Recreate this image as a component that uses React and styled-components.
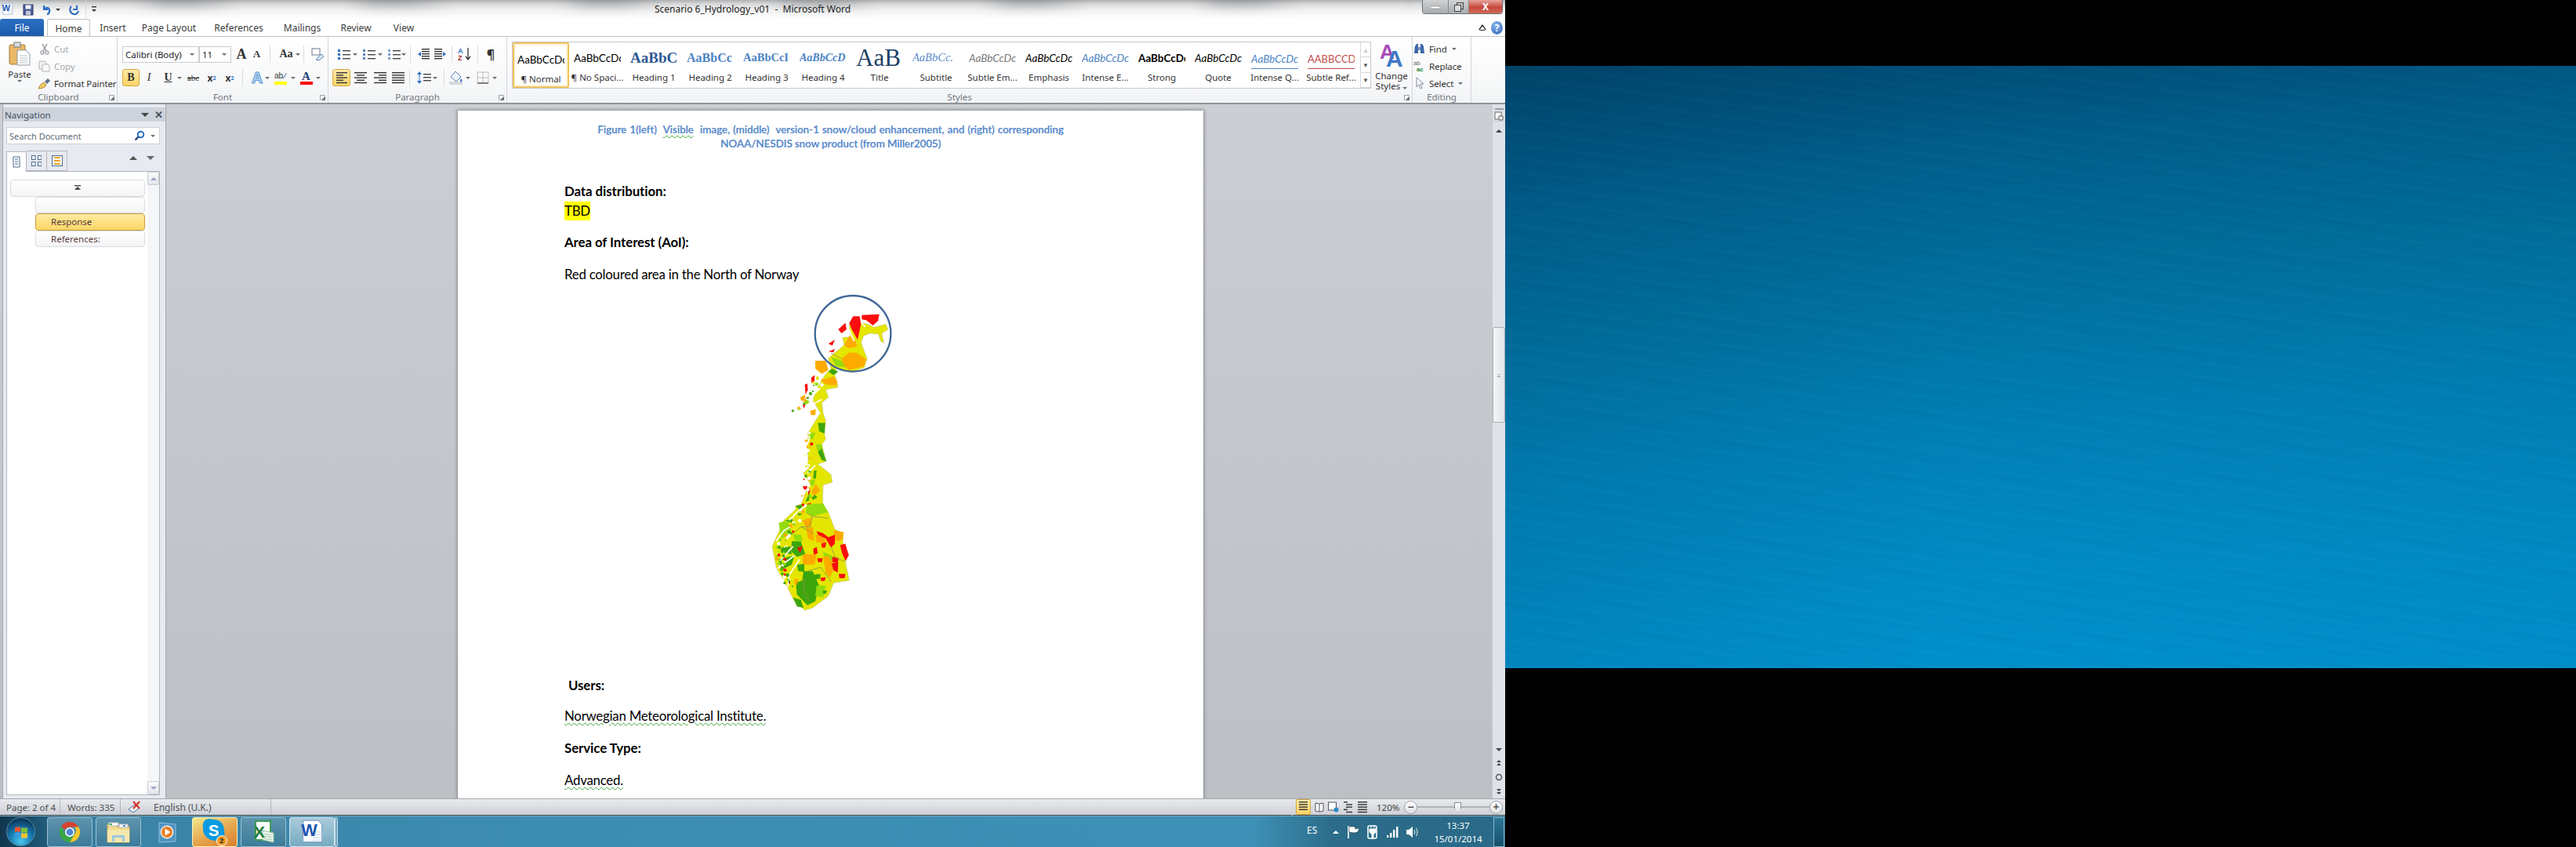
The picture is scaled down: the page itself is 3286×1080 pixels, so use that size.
import styled, { createGlobalStyle } from "styled-components";

const UI = `"Noto Sans", "Open Sans", sans-serif`;
const DOC = `Lato, "Open Sans", sans-serif`;

const Global = createGlobalStyle`
  html, body { margin: 0; padding: 0; background: #000; }
  * { box-sizing: border-box; }
`;

const Desk = styled.div`
  width: 3286px;
  height: 1080px;
  display: flex;
  overflow: hidden;
  background: #000;
  font-family: ${UI};
`;

const Screen = styled.div`
  width: 1920px;
  height: 1080px;
  flex: none;
  display: flex;
  flex-direction: column;
`;

const Second = styled.div`
  flex: 1;
  padding-top: 84px;
`;

const Wallpaper = styled.div`
  height: 768px;
  background:
    repeating-linear-gradient(187deg, rgba(255,255,255,0) 0 7px, rgba(255,255,255,.012) 9px 11px, rgba(0,0,0,.012) 13px 17px),
    repeating-linear-gradient(192deg, rgba(0,40,80,0) 0 23px, rgba(0,40,80,.018) 26px 29px),
    linear-gradient(90deg, rgba(0,30,60,.08), rgba(0,0,0,0) 40%, rgba(0,0,0,.03)),
    linear-gradient(174deg, #00456b 0%, #005d8b 18%, #00709f 38%, #0081b8 60%, #008cc6 80%, #0092d1 100%);
`;

/* ---- window chrome ---- */
const Chrome = styled.div`
  height: 47px;
  position: relative;
  overflow: hidden;
  background: linear-gradient(#aeb0b2 0, #d8d9da 5px, #f2f2f2 13px, #fff 24px);
  border-bottom: 1px solid #bfc1c4;
`;

const Blur = styled.div`
  position: absolute;
  left: 80px;
  right: 120px;
  top: -6px;
  height: 16px;
  filter: blur(7px);
  background: repeating-linear-gradient(90deg, rgba(70,75,80,.0) 0 90px, rgba(70,75,80,.28) 130px 170px, rgba(70,75,80,0) 230px 270px);
`;

const TitleBar = styled.div`
  position: relative;
  height: 24px;
  display: grid;
  grid-template-columns: 1fr auto 1fr;
  align-items: start;
`;

const Qat = styled.div`
  display: flex;
  align-items: center;
  height: 24px;
  padding-left: 2px;
`;

const WindowTitle = styled.div`
  font-size: 12px;
  line-height: 24px;
  color: #222;
  white-space: pre;
`;

const WinButtons = styled.div`
  justify-self: end;
  margin-right: 3px;
  width: 103px;
  height: 18px;
  display: flex;
  border: 1px solid #6e7276;
  border-top: 0;
  border-radius: 0 0 4px 4px;
  overflow: hidden;
`;

const WinBtn = styled.div`
  width: ${(p) => p.$w}px;
  display: flex;
  align-items: center;
  justify-content: center;
  color: #fff;
  font-size: 12px;
  font-weight: 700;
  background: ${(p) => (p.$close ? "linear-gradient(#e9a59b,#c8483c 55%,#d26a58)" : "linear-gradient(#d0d2d4,#a9acaf)")};
  border-right: ${(p) => (p.$close ? "0" : "1px solid #85898c")};
`;

const TabRow = styled.div`
  position: relative;
  height: 23px;
  display: flex;
  align-items: stretch;
`;

const FileTab = styled.div`
  width: 56px;
  display: flex;
  align-items: center;
  justify-content: center;
  color: #fff;
  font-size: 12px;
  border-radius: 3px 3px 0 0;
  background: linear-gradient(#2a6fc4, #1d5aa8);
`;

const Tab = styled.div`
  width: ${(p) => p.$w}px;
  margin-left: ${(p) => p.$ml || 0}px;
  display: flex;
  align-items: center;
  justify-content: center;
  font-size: 12px;
  color: #3b3b3b;
  ${(p) => p.$on && `
    height: 24px;
    background: #fff;
    border: 1px solid #bfc1c4;
    border-bottom: 0;
    border-radius: 3px 3px 0 0;
  `}
`;

const HelpArea = styled.div`
  margin-left: auto;
  display: flex;
  align-items: center;
  gap: 6px;
  padding-right: 3px;
`;

const HelpDot = styled.div`
  width: 15px;
  height: 17px;
  border-radius: 50%;
  background: radial-gradient(circle at 40% 30%, #8fb6ea, #2c62b8);
  color: #fff;
  font-size: 12px;
  font-weight: 700;
  text-align: center;
  line-height: 17px;
`;

/* ---- ribbon ---- */
const RibbonBar = styled.div`
  height: 86px;
  display: flex;
  background: linear-gradient(#fff, #f7f8f9 70%, #f2f3f5);
  border-bottom: 2px solid #8f9399;
`;

const Group = styled.div`
  position: relative;
  width: ${(p) => p.$w}px;
  flex: none;
  display: flex;
  flex-direction: column;
  border-right: ${(p) => (p.$plain ? "0" : "1px solid #d3d5d9")};
`;

const GroupBody = styled.div`
  flex: 1;
  display: flex;
  min-height: 0;
`;

const GroupLabel = styled.div`
  height: 12px;
  line-height: 12px;
  margin-bottom: 1px;
  text-align: center;
  font-size: 11.5px;
  color: #70757c;
`;

const Launcher = styled.div`
  position: absolute;
  right: 3px;
  bottom: 3px;
  width: 7px;
  height: 7px;
  border-left: 1px solid #a0a4a8;
  border-top: 1px solid #a0a4a8;
  background: linear-gradient(135deg, transparent 55%, #70757c 55%);
`;

const PasteCol = styled.div`
  width: 46px;
  margin-left: 2px;
  padding-top: 6px;
  display: flex;
  flex-direction: column;
  align-items: center;
  font-size: 11.5px;
  color: #333;
  line-height: 14px;
`;

const SmallCol = styled.div`
  display: flex;
  flex-direction: column;
  padding-top: 4px;
`;

const SmallRow = styled.div`
  height: 22px;
  display: flex;
  align-items: center;
  gap: 4px;
  font-size: 11.5px;
  color: ${(p) => (p.$dim ? "#a5a8ac" : "#333")};
  white-space: nowrap;
  letter-spacing: -0.1px;
`;

const IconSlot = styled.span`
  width: 17px;
  display: inline-flex;
  justify-content: center;
`;

const ToolCol = styled.div`
  display: flex;
  flex-direction: column;
  gap: 8px;
  padding: 11px 0 0 ${(p) => p.$pl}px;
`;

const ToolRow = styled.div`
  height: 22px;
  display: flex;
  align-items: center;
`;

const Combo = styled.div`
  width: ${(p) => p.$w}px;
  height: 21px;
  background: #fff;
  border: 1px solid #c9ccd0;
  display: flex;
  align-items: center;
  justify-content: space-between;
  padding: 0 5px 0 3px;
  font-size: 11.5px;
  color: #222;
  white-space: nowrap;
  margin-left: ${(p) => p.$ml || 0}px;
`;

const Caret = styled.span`
  display: inline-block;
  width: 0;
  height: 0;
  margin-left: ${(p) => p.$ml ?? 2}px;
  border-left: 3px solid transparent;
  border-right: 3px solid transparent;
  border-top: 3px solid ${(p) => p.$c || "#6a6e73"};
`;

const Tool = styled.div`
  width: ${(p) => p.$w || 20}px;
  height: 22px;
  margin-left: ${(p) => p.$ml || 0}px;
  flex: none;
  display: flex;
  align-items: center;
  justify-content: center;
  font-family: ${(p) => (p.$serif ? `"Liberation Serif", serif` : UI)};
  font-size: ${(p) => p.$fs || 13}px;
  font-weight: ${(p) => (p.$b ? 700 : 400)};
  font-style: ${(p) => (p.$i ? "italic" : "normal")};
  color: #333;
  ${(p) => p.$on && `
    background: linear-gradient(#fde9a8, #fdd466);
    border: 1px solid #d8a93c;
    border-radius: 3px;
  `}
`;

const Sep = styled.div`
  width: 1px;
  height: 22px;
  flex: none;
  margin-left: ${(p) => p.$ml || 6}px;
  background: #d9dbde;
`;

const Gallery = styled.div`
  width: 1096px;
  height: 60px;
  margin: 6px 0 0 6px;
  flex: none;
  display: flex;
  border: 1px solid #c6c9cd;
  background: #fff;
`;

const StyleCard = styled.div`
  width: 72px;
  height: 58px;
  flex: none;
  overflow: hidden;
  display: flex;
  flex-direction: column;
  align-items: center;
  ${(p) => p.$on && `
    border: 2px solid #f1c35f;
    border-radius: 2px;
    box-shadow: inset 0 0 0 2px #fff5d8;
  `}
`;

const Sample = styled.div`
  width: 60px;
  height: 37px;
  flex: none;
  padding-top: 2px;
  overflow: hidden;
  white-space: nowrap;
  display: flex;
  align-items: center;
  font-family: ${(p) => p.$font};
  font-size: ${(p) => p.$fs}px;
  font-weight: ${(p) => p.$wt || 400};
  font-style: ${(p) => (p.$i ? "italic" : "normal")};
  color: ${(p) => p.$c};
  ${(p) => p.$ul && `box-shadow: inset 0 -7px 0 -6px ${p.$c}; height: 29px; margin: 5px 0 3px;`}
`;

const StyleName = styled.div`
  font-size: 11.5px;
  line-height: 16px;
  color: #333;
  white-space: nowrap;
`;

const GalleryArrows = styled.div`
  width: 13px;
  margin-left: auto;
  flex: none;
  display: flex;
  flex-direction: column;
  border-left: 1px solid #d6d8db;
`;

const GalleryArrow = styled.div`
  flex: 1;
  display: flex;
  align-items: center;
  justify-content: center;
  border-bottom: 1px solid #d6d8db;
  font-size: 8px;
  color: ${(p) => (p.$dim ? "#c5c7ca" : "#555")};
`;

const BigBtn = styled.div`
  width: 52px;
  padding-top: 4px;
  display: flex;
  flex-direction: column;
  align-items: center;
  font-size: 11.5px;
  line-height: 13px;
  color: #333;
  text-align: center;
`;

/* ---- main area ---- */
const Main = styled.div`
  height: 885px;
  display: flex;
  min-height: 0;
  background: linear-gradient(#cbced3, #bcbfc4);
`;

const NavPane = styled.div`
  width: 209px;
  margin-left: 3px;
  flex: none;
  background: #e7eaf0;
  border-left: 1px solid #a5a9ae;
  border-right: 1px solid #a5a9ae;
  padding-top: 4px;
  display: flex;
  flex-direction: column;
`;

const NavHead = styled.div`
  height: 18px;
  display: flex;
  align-items: center;
  justify-content: space-between;
  padding: 0 3px 0 2px;
  background: #cdd3dc;
  font-size: 11.5px;
  color: #44505f;
`;

const NavTools = styled.div`
  display: flex;
  align-items: center;
  gap: 7px;
`;

const Search = styled.div`
  height: 22px;
  margin: 7px 7px 0 4px;
  background: #fff;
  border: 1px solid #ccd0d6;
  display: flex;
  align-items: center;
  justify-content: space-between;
  padding: 0 5px 0 3px;
  font-size: 11px;
  color: #5e6a78;
`;

const NavTabs = styled.div`
  height: 26px;
  margin: 8px 7px 0 4px;
  display: flex;
  align-items: flex-end;
`;

const NavTab = styled.div`
  width: 26px;
  height: 26px;
  margin-bottom: ${(p) => (p.$on ? "-1px" : 0)};
  flex: none;
  display: flex;
  align-items: center;
  justify-content: center;
  border: 1px solid #b3b7bd;
  border-left-width: ${(p) => (p.$first ? 1 : 0)}px;
  border-bottom: ${(p) => (p.$on ? "0" : "1px solid #b3b7bd")};
  background: ${(p) => (p.$on ? "#fff" : "#e7eaf0")};
  position: relative;
  z-index: ${(p) => (p.$on ? 1 : 0)};
`;

const NavArrows = styled.div`
  margin-left: auto;
  padding: 0 7px 8px 0;
  display: flex;
  gap: 12px;
  align-self: center;
`;

const NavTree = styled.div`
  flex: 1;
  min-height: 0;
  margin: 0 7px 4px 4px;
  border: 1px solid #b3b7bd;
  background: #fff;
  display: flex;
`;

const TreeList = styled.div`
  flex: 1;
  padding: 10px 3px 0 3px;
  display: flex;
  flex-direction: column;
  align-items: flex-end;
`;

const TreeItem = styled.div`
  width: ${(p) => p.$w}px;
  height: 21.5px;
  flex: none;
  display: flex;
  align-items: center;
  justify-content: ${(p) => (p.$center ? "center" : "flex-start")};
  padding-left: ${(p) => (p.$center ? 0 : 19)}px;
  border: 1px solid ${(p) => (p.$on ? "#c69a3c" : "#d9dbde")};
  border-radius: 4px;
  background: ${(p) => (p.$on ? "linear-gradient(#fdeaa0,#fdd768)" : "linear-gradient(#fff,#f3f4f6)")};
  font-size: 11.5px;
  color: #5a3a3a;
`;

const ScrollRail = styled.div`
  width: ${(p) => p.$w}px;
  flex: none;
  display: flex;
  flex-direction: column;
  align-items: center;
  background: ${(p) => p.$bg || "#f5f6f8"};
`;

const ScrollArrow = styled.div`
  width: 15px;
  height: ${(p) => p.$h || 17}px;
  flex: none;
  display: flex;
  align-items: center;
  justify-content: center;
  ${(p) => p.$boxed && `
    border: 1px solid #c6cad0;
    border-radius: 2px;
    background: linear-gradient(#fbfcfd,#e3e6eb);
  `}
  margin-top: ${(p) => p.$mt || 0}px;
`;

const Tri = styled.span`
  display: block;
  width: 0;
  height: 0;
  border-left: ${(p) => p.$s}px solid transparent;
  border-right: ${(p) => p.$s}px solid transparent;
  ${(p) => (p.$up ? "border-bottom" : "border-top")}: ${(p) => p.$s}px solid ${(p) => p.$c};
`;

const Thumb = styled.div`
  width: 16px;
  height: 122px;
  margin-top: ${(p) => p.$mt}px;
  flex: none;
  border: 1px solid #a9adb3;
  border-radius: 2px;
  background: linear-gradient(90deg, #f4f5f7, #e1e4e9);
  display: flex;
  align-items: center;
  justify-content: center;
  color: #888;
  font-size: 8px;
`;

const Workspace = styled.div`
  flex: 1;
  min-width: 0;
  overflow: hidden;
  padding: 8px 0 0 372px;
`;

const Page = styled.div`
  width: 951px;
  height: 900px;
  padding: 15px 0 0 136px;
  background: #fff;
  box-shadow: 0 0 4px 1px #85888c;
  font-family: ${DOC};
  font-size: 16.8px;
  color: #000;
  letter-spacing: -0.22px;
`;

const Caption = styled.div`
  margin-left: -136px;
  text-align: center;
  font-size: 13.6px;
  font-weight: 700;
  line-height: 18px;
  color: #5b8bcb;
  letter-spacing: -0.2px;
  word-spacing: ${(p) => p.$ws || 0}px;
`;

const Squiggle = styled.span`
  text-decoration: underline wavy ${(p) => p.$c || "#3aa53a"} 1px;
  text-underline-offset: 2px;
`;

const Line = styled.div`
  height: 24px;
  line-height: 24px;
  margin-top: ${(p) => p.$mt}px;
  margin-left: ${(p) => p.$ml || 0}px;
  font-weight: ${(p) => (p.$b ? 700 : 400)};
  letter-spacing: ${(p) => (p.$b ? "-0.05px" : "inherit")};
  white-space: nowrap;
`;

const Mark = styled.span`
  display: inline-block;
  background: #ff0;
`;

const Figure = styled.div`
  margin: 8px 0 0 230px;
  width: 220px;
  height: 420px;
`;

const VScroll = styled(ScrollRail)`
  background: #dfe2e9;
  border-left: 1px solid #c8cbd1;
`;

const RulerBtn = styled.div`
  width: 15px;
  height: 15px;
  margin-top: 2px;
  display: flex;
  align-items: center;
  justify-content: center;
  border-bottom: 1px solid #c8cbd1;
`;

const SplitBar = styled.div`
  width: 11px;
  height: 2px;
  margin-top: 5px;
  background: #9a9ea4;
`;

/* ---- status + taskbar ---- */
const Status = styled.div`
  height: 22px;
  display: flex;
  align-items: center;
  background: linear-gradient(#e8eaee, #cdd0d5);
  border-top: 1px solid #a3a7ac;
  border-bottom: 1px solid #3c4a52;
  font-size: 11.5px;
  color: #4c4f54;
`;

const StatusCell = styled.div`
  width: ${(p) => p.$w}px;
  height: 100%;
  flex: none;
  display: flex;
  align-items: center;
  padding-left: ${(p) => p.$pl}px;
  border-right: 1px solid #b4b7bc;
  white-space: nowrap;
`;

const ViewArea = styled.div`
  margin-left: auto;
  display: flex;
  align-items: center;
  height: 100%;
`;

const ViewBtn = styled.div`
  width: ${(p) => p.$w}px;
  height: 20px;
  margin-left: ${(p) => p.$ml || 0}px;
  display: flex;
  align-items: center;
  justify-content: center;
  ${(p) => p.$on && `
    background: linear-gradient(#fde9a8,#fdd466);
    border: 1px solid #d8a93c;
    border-radius: 2px;
  `}
`;

const Zoom = styled.div`
  margin-left: 12px;
  width: 30px;
  color: #444;
  font-size: 11.5px;
`;

const ZoomRound = styled.div`
  width: 17px;
  height: 17px;
  margin-left: ${(p) => p.$ml || 0}px;
  flex: none;
  border-radius: 50%;
  border: 1px solid #9a9ea3;
  background: linear-gradient(#fff,#dfe1e5);
  display: flex;
  align-items: center;
  justify-content: center;
  color: #555;
  font-size: 14px;
  font-weight: 700;
  line-height: 1;
`;

const ZoomTrack = styled.div`
  width: 92px;
  height: 2px;
  flex: none;
  background: #b0b3b8;
  display: flex;
  align-items: center;
`;

const ZoomThumb = styled.div`
  width: 9px;
  height: 13px;
  margin-left: 47px;
  background: linear-gradient(#fff,#dfe1e5);
  border: 1px solid #888c91;
  clip-path: polygon(0 0, 100% 0, 100% 65%, 50% 100%, 0 65%);
`;

const Taskbar = styled.div`
  height: 40px;
  display: flex;
  align-items: center;
  background: linear-gradient(90deg, #10364c 0, #1d5673 50px, #3a83a6 130px, #3d8db3 700px, #3e90b6 1600px, #2b6c8a 1700px, #2a6a88 100%);
  border-top: 1px solid #7fa6b9;
`;

const Orb = styled.div`
  width: 37px;
  height: 37px;
  margin-left: 8px;
  flex: none;
  border-radius: 50%;
  display: flex;
  align-items: center;
  justify-content: center;
  background: radial-gradient(circle at 50% 85%, #46c6ef 0, #1576ad 45%, #0c3a5e 80%);
  border: 1px solid #5a8aa8;
`;

const TaskBtn = styled.div`
  width: 58px;
  height: 38px;
  margin-left: ${(p) => p.$ml || 4}px;
  flex: none;
  display: flex;
  align-items: center;
  justify-content: center;
  border-radius: 3px;
  ${(p) => p.$look === "hot" && `
    background: linear-gradient(155deg,#f3e88a,#e5a44c 55%,#d97f2e);
    border: 1px solid #fff3c2;
  `}
  ${(p) => p.$look === "run" && `
    background: linear-gradient(#5e94ad,#3c7b9a);
    border: 1px solid #9cc0d1;
  `}
  ${(p) => p.$look === "active" && `
    background: linear-gradient(#a9cbda,#78abc2);
    border: 1px solid #d6e8f0;
  `}
`;

const TaskStub = styled.div`
  width: 4px;
  height: 38px;
  flex: none;
  background: #79a9bf;
  border: 1px solid #c4dbe6;
  border-radius: 0 2px 2px 0;
`;

const Tray = styled.div`
  margin-left: auto;
  height: 100%;
  display: flex;
  align-items: center;
  color: #fff;
`;

const Lang = styled.div`
  font-size: 12px;
  width: 33px;
  margin-bottom: 4px;
`;

const Clock = styled.div`
  width: 82px;
  margin-left: 10px;
  text-align: center;
  font-size: 11.5px;
  line-height: 17px;
`;

const ShowDesktop = styled.div`
  width: 14px;
  height: 38px;
  margin-left: 4px;
  margin-right: 1px;
  background: linear-gradient(#2c7797,#16506c);
  border: 1px solid #8cb6c9;
`;

/* ---- drawn icons ---- */
const Svg = ({ w, h, children, ...rest }) => (
  <svg width={w} height={h} viewBox={`0 0 ${w} ${h}`} {...rest}>{children}</svg>
);

const WordDoc = ({ w = 26, h = 28 }) => (
  <svg width={w} height={h} viewBox="0 0 26 28">
    <path d="M3 1h17l4 4v20H3z" fill="#fff" stroke="#7fa0cc" />
    <path d="M14 14h11M14 17h11M14 20h11M14 23h9" stroke="#c9d3e2" />
    <text x="1" y="18" fontFamily="Liberation Sans" fontWeight="700" fontSize="19" fill="#1c54b0">W</text>
  </svg>
);

const Lines = ({ rows, w = 16 }) => (
  <Svg w={w} h={16}>
    {rows.map(([x, len], i) => (
      <rect key={i} x={x} y={1 + i * 3.2} width={len} height="1.4" fill="#333" />
    ))}
  </Svg>
);

const ListIcon = ({ dot }) => (
  <Svg w={17} h={16}>
    {[2, 7, 12].map((y) => (
      <g key={y}>
        <rect x="1" y={y} width="3" height="3" fill={dot} />
        <rect x="7" y={y + 1} width="10" height="1.4" fill="#444" />
      </g>
    ))}
  </Svg>
);

const IndentIcon = ({ flip }) => (
  <Svg w={16} h={16} style={flip ? { transform: "scaleX(-1)" } : undefined}>
    {[1, 4, 7, 10, 13].map((y) => <rect key={y} x="6" y={y} width="10" height="1.4" fill="#333" />)}
    <path d="M1 8l4-3v6z" fill="#2f6fc4" />
  </Svg>
);

const PasteIcon = () => (
  <Svg w={28} h={31}>
    <rect x="1" y="4" width="20" height="25" rx="2" fill="#e9b866" stroke="#a77b32" />
    <rect x="7" y="1" width="8" height="6" fill="#d9dde3" stroke="#777" />
    <path d="M11 11h11l5 5v14H11z" fill="#fff" stroke="#8e98a6" />
    <path d="M14 18h10M14 21h10M14 24h10M14 27h10" stroke="#b5bdc9" />
  </Svg>
);

const BrushIcon = () => (
  <Svg w={17} h={15}>
    <path d="M1 14c2-5 4-7 7-8l3 3c-1 3-4 5-10 5z" fill="#eec765" stroke="#a07c2c" strokeWidth=".8" />
    <path d="M9 5l4-4 3 3-4 4z" fill="#5e6e86" />
  </Svg>
);

const ScissorIcon = () => (
  <Svg w={12} h={15}>
    <path d="M3 1l5 9M9 1L4 10" stroke="#a5a8ac" strokeWidth="1.6" />
    <circle cx="3" cy="12" r="2" fill="none" stroke="#a5a8ac" strokeWidth="1.4" />
    <circle cx="9" cy="12" r="2" fill="none" stroke="#a5a8ac" strokeWidth="1.4" />
  </Svg>
);

const CopyIcon = () => (
  <Svg w={15} h={15}>
    <path d="M1 1h7l2 2v8H1z" fill="#f2f3f4" stroke="#b0b3b7" />
    <path d="M5 5h7l2 2v7H5z" fill="#f8f8f8" stroke="#b0b3b7" />
  </Svg>
);

const Binoculars = () => (
  <Svg w={15} h={16}>
    <path d="M1 14l1-9 2-3h2v12zM14 14l-1-9-2-3H9v12z" fill="#3f66a6" />
    <rect x="6" y="6" width="3" height="4" fill="#7d93b8" />
  </Svg>
);

const ChangeStylesIcon = () => (
  <Svg w={30} h={36}>
    <text x="0" y="24" fontFamily="Liberation Sans" fontWeight="700" fontSize="26" fill="#a64cb5">A</text>
    <text x="8" y="34" fontFamily="Liberation Sans" fontWeight="700" fontSize="30" fill="#3f78c4">A</text>
  </Svg>
);

const Magnifier = () => (
  <Svg w={14} h={14}>
    <circle cx="8.5" cy="5.5" r="3.8" fill="#fff" stroke="#2f6fc4" strokeWidth="2" />
    <path d="M5.5 8.5L1.5 12.5" stroke="#1e3f78" strokeWidth="2.4" />
  </Svg>
);

const ChromeIcon = () => (
  <Svg w={28} h={28}>
    <path d="M14 1a13 13 0 0 1 11.3 6.5H14a6.5 6.5 0 0 0-6 4L3.2 6.5A13 13 0 0 1 14 1z" fill="#d8412f" />
    <path d="M25.3 7.5A13 13 0 0 1 14 27l5.6-9.7A6.5 6.5 0 0 0 20 7.5z" fill="#f6c626" />
    <path d="M14 27A13 13 0 0 1 3.2 6.5L8.8 17a6.5 6.5 0 0 0 10.8.3z" fill="#3aa648" />
    <circle cx="14" cy="14" r="5.2" fill="#4a86d8" stroke="#fff" strokeWidth="1.6" />
  </Svg>
);

const FolderIcon = () => (
  <Svg w={32} h={32}>
    <path d="M2 6h10l2 3h16v20H2z" fill="#f0d98a" stroke="#c9a652" />
    <rect x="4" y="4" width="12" height="4" fill="#fff" stroke="#bbb" />
    <rect x="5" y="5" width="3" height="2" fill="#3ab54a" />
    <rect x="17" y="6" width="11" height="4" fill="#fff" stroke="#bbb" />
    <rect x="22" y="7" width="3" height="2" fill="#3a86d8" />
    <path d="M2 13h28v16H2z" fill="#f6e7ad" />
    <path d="M8 28v-8h16v8h-3v-5H11v5z" fill="#9cc7e0" />
  </Svg>
);

const MediaIcon = () => (
  <Svg w={27} h={28}>
    <path d="M3 2l21 2v22L3 27z" fill="#4d93c1" stroke="#8fc0dc" />
    <circle cx="13" cy="14" r="8.5" fill="#f2f2f2" />
    <circle cx="13" cy="14" r="7" fill="#e77e22" />
    <path d="M10.5 9.5l7 4.5-7 4.5z" fill="#fff" />
  </Svg>
);

const SkypeIcon = () => (
  <Svg w={34} h={36}>
    <path d="M6 2c4-2 7 0 10 0 8 0 13 6 13 14 0 3 1 5 0 8-1 4-5 6-9 5-2 0-4 0-6-.5C7 27 2 21 2 14c0-3-1-4 0-7 .6-2 2-4 4-5z" fill="#0b9be0" />
    <text x="9" y="23" fontFamily="Liberation Sans" fontWeight="700" fontSize="20" fill="#fff">S</text>
    <circle cx="26" cy="29" r="6.5" fill="#f39a1f" stroke="#fff" />
    <text x="23.2" y="32.4" fontFamily="Liberation Sans" fontWeight="700" fontSize="9" fill="#222">2</text>
  </Svg>
);

const ExcelIcon = () => (
  <Svg w={30} h={32}>
    <path d="M5 2h19v24H5z" fill="#fff" stroke="#3c9b52" strokeWidth="2" />
    <path d="M14 14l14 3v12l-14-3z" fill="#eef5ee" stroke="#8cbf97" />
    <path d="M16 18l10 2M16 21l10 2M16 24l10 2" stroke="#9cc7a5" />
    <text x="3" y="23" fontFamily="Liberation Sans" fontWeight="700" fontSize="21" fill="#1f7a3a">X</text>
  </Svg>
);

const FlagIcon = () => (
  <Svg w={18} h={18}>
    <path d="M2 1v16" stroke="#fff" strokeWidth="1.6" />
    <path d="M3 2h7l1 3 5-1-2 5-5 1-6-1z" fill="#fff" stroke="#123" strokeWidth=".5" />
  </Svg>
);

const PlugIcon = () => (
  <Svg w={15} h={20}>
    <rect x="1" y="2" width="11" height="16" rx="2" fill="none" stroke="#fff" strokeWidth="1.6" />
    <path d="M5 1v4M9 1v4M3 6h8v4l-3 3v5H6v-5L3 10z" fill="#fff" stroke="#fff" />
  </Svg>
);

const SignalIcon = () => (
  <Svg w={16} h={16}>
    {[[1, 12, 3], [5, 9, 6], [9, 5, 10], [13, 1, 14]].map(([x, y, h]) => (
      <rect key={x} x={x} y={y} width="2.4" height={h} fill="#fff" />
    ))}
  </Svg>
);

const SpeakerIcon = () => (
  <Svg w={16} h={18}>
    <path d="M1 6h3l5-4v14l-5-4H1z" fill="#fff" />
    <path d="M11 6c1 2 1 4 0 6M13.5 4c2 3 2 7 0 10" stroke="#fff" fill="none" />
  </Svg>
);

const WinFlag = () => (
  <Svg w={20} h={20}>
    <path d="M2 4c3-1 5-1 7 0v6c-2-1-4-1-7 0z" fill="#e8542f" />
    <path d="M10 4c3 1 5 1 8 0v6c-3 1-5 1-8 0z" fill="#7fbf3a" />
    <path d="M2 11c3-1 5-1 7 0v6c-2-1-4-1-7 0z" fill="#3a9be0" />
    <path d="M10 11c3 1 5 1 8 0v6c-3 1-5 1-8 0z" fill="#f5c32c" />
  </Svg>
);

/* Map of Norway, traced from the figure; colours are the legend classes */
const YEL = "#e4e600";
const ORG = "#fdab00";
const RED = "#fa0d0d";
const GRN = "#3ea60a";
const LIM = "#93dc0c";

const BODY = "M450 125 470 130 495 142 540 130 548 150 525 165 532 203 520 195 512 168 480 165 455 175 445 200 468 262 458 295 410 315 350 300 345 325 350 340 357 372 310 380 320 410 295 430 300 470 310 500 305 550 310 570 295 590 312 655 280 665 330 705 335 735 300 745 298 815 320 850 345 915 378 930 375 965 398 1010 385 1040 400 1110 340 1120 320 1170 260 1215 230 1225 190 1190 160 1130 120 1060 105 980 150 880 215 820 235 770 250 740 225 700 245 680 240 610 240 550 270 500 290 470 260 420 280 370 310 320 330 300 320 260 380 210 375 180 405 180 400 130Z";

const PATCHES = [
  [ORG, "M380 210 400 175 425 195 430 215 395 222Z"],
  [ORG, "M370 262 400 238 430 240 465 265 455 292 400 305 380 290Z"],
  [LIM, "M330 255 370 270 385 295 350 290Z"],
  [RED, "M448 95 515 92 510 118 490 135 465 115 448 112Z"],
  [RED, "M400 125 415 100 440 100 445 130 432 190 410 150Z"],
  [RED, "M358 150 385 125 390 150 370 165Z"],
  [RED, "M320 205 345 190 335 212Z"],
  [RED, "M320 235 345 225 340 238Z"],
  [GRN, "M320 312 335 300 358 312 340 325Z"],
  [ORG, "M270 270 310 270 320 305 295 320 270 300Z"],
  [ORG, "M290 345 340 330 355 350 350 365 310 360Z"],
  [RED, "M254 335 268 325 266 355 256 355Z"],
  [RED, "M230 360 240 358 242 395 232 395Z"],
  [ORG, "M212 410 232 398 228 422 216 422Z"],
  [RED, "M222 440 234 434 226 452Z"],
  [ORG, "M250 462 272 455 270 478 254 478Z"],
  [GRN, "M280 508 308 508 305 548 285 540Z"],
  [LIM, "M245 545 270 545 262 570 245 570Z"],
  [LIM, "M272 590 295 590 298 610 280 620Z"],
  [GRN, "M280 620 295 605 312 655 295 650Z"],
  [GRN, "M265 690 275 690 272 720 262 720Z"],
  [LIM, "M250 730 270 720 265 745 252 750Z"],
  [ORG, "M255 770 272 742 288 765 265 790Z"],
  [RED, "M222 750 240 750 236 762 226 762Z"],
  [RED, "M240 762 252 760 244 788Z"],
  [GRN, "M232 810 250 770 246 805Z"],
  [GRN, "M255 795 268 783 278 792 262 802Z"],
  [RED, "M232 820 254 814 252 826 236 826Z"],
  [GRN, "M195 825 222 818 216 838 198 840Z"],
  [LIM, "M235 820 300 815 318 850 260 865 235 850Z"],
  [ORG, "M220 880 255 870 255 900 235 910Z"],
  [ORG, "M235 910 262 905 265 960 242 950Z"],
  [LIM, "M185 935 215 935 222 960 195 965Z"],
  [ORG, "M340 920 378 925 375 955 348 960Z"],
  [ORG, "M270 935 300 935 310 965 275 965Z"],
  [RED, "M275 922 300 930 320 945 345 935 345 970 330 985 310 950 280 935Z"],
  [RED, "M365 975 385 970 398 1015 385 1035 372 1005Z"],
  [RED, "M262 990 275 982 280 1005 265 1015Z"],
  [RED, "M293 968 312 965 308 985 295 985Z"],
  [GRN, "M135 985 175 980 180 1010 140 1005Z"],
  [GRN, "M180 960 215 962 232 1010 200 1020 178 1000Z"],
  [RED, "M200 985 222 980 212 1005Z"],
  [GRN, "M130 1030 190 1015 180 1050 140 1070Z"],
  [LIM, "M130 890 165 880 180 930 140 950Z"],
  [GRN, "M155 880 185 875 180 890Z"],
  [ORG, "M222 1010 275 1010 268 1050 222 1050Z"],
  [LIM, "M300 1000 340 1020 330 1050 305 1030Z"],
  [ORG, "M300 1020 320 1015 345 1060 325 1100 310 1080Z"],
  [RED, "M335 1020 360 1025 355 1045 335 1040Z"],
  [RED, "M332 1045 358 1042 356 1080 340 1072Z"],
  [RED, "M360 1085 385 1085 382 1102 362 1102Z"],
  [RED, "M278 1025 298 1025 296 1040 280 1040Z"],
  [GRN, "M200 1050 228 1048 228 1078 205 1075Z"],
  [GRN, "M225 1075 260 1075 285 1130 270 1190 240 1205 200 1165 195 1120 220 1110Z"],
  [GRN, "M265 1088 290 1085 288 1105 272 1105Z"],
  [LIM, "M275 1130 310 1130 300 1175 270 1170Z"],
  [RED, "M290 1100 310 1098 306 1112 292 1112Z"],
  [GRN, "M298 1150 315 1148 310 1162 300 1162Z"],
  [ORG, "M190 1105 205 1105 198 1130 190 1125Z"],
  [GRN, "M185 1175 215 1185 225 1215 200 1210Z"],
];

const WHITE = [
  "M290 375 262 400 240 412",
  "M295 418 262 435",
  "M235 825 210 840 170 880",
  "M190 895 150 920 120 960",
  "M185 980 135 1035",
  "M190 1015 125 1065",
  "M210 1030 170 1090 165 1135",
  "M250 560 235 600",
  "M270 670 240 700",
  "M400 150 418 195",
  "M445 125 462 140",
];

const BORDERS = [
  "M235 850 258 865 320 872",
  "M258 865 250 905 215 905 180 935",
  "M330 980 345 1020 385 1040",
  "M240 1075 290 1060 320 1100 330 1115",
  "M225 1100 228 1160 248 1190",
  "M215 905 265 930",
  "M370 262 330 240",
];

// west coast is a scatter of islands and fjords, so fleck it with a fixed sequence
const COAST = [[200, 470, 300, 330], [225, 820, 130, 1000], [130, 1000, 170, 1140], [240, 540, 235, 800]];
const FLECKS = [];
{
  let seed = 11;
  const next = () => { seed = (seed * 16807) % 2147483647; return seed / 2147483647; };
  const COLORS = ["#fff", "#fff", GRN, LIM, ORG, YEL, "#fff", RED];
  COAST.forEach(([x1, y1, x2, y2]) => {
    for (let i = 0; i < 34; i++) {
      const t = next();
      FLECKS.push({
        x: x1 + (x2 - x1) * t + (next() - 0.5) * 34,
        y: y1 + (y2 - y1) * t + (next() - 0.5) * 18,
        r: 2 + next() * 5,
        c: COLORS[Math.floor(next() * COLORS.length)],
      });
    }
  });
}

const NorwayMap = () => (
  <svg width="220" height="420" viewBox="0 0 660 1260">
    <defs>
      <filter id="soft"><feGaussianBlur stdDeviation="1.5" /></filter>
    </defs>
    <g filter="url(#soft)">
      <path d={BODY} fill={YEL} stroke="#c9c98a" strokeWidth="2" />
      {PATCHES.map(([fill, d], i) => <path key={i} d={d} fill={fill} />)}
      {BORDERS.map((d, i) => <path key={i} d={d} fill="none" stroke="#8d9155" strokeWidth="2.5" />)}
      {WHITE.map((d, i) => <path key={i} d={d} fill="none" stroke="#fff" strokeWidth="5" />)}
      {FLECKS.map((f, i) => <circle key={i} cx={f.x} cy={f.y} r={f.r} fill={f.c} />)}
    </g>
    <circle cx="414" cy="166" r="145" fill="none" stroke="#3f6797" strokeWidth="7" />
  </svg>
);

const SERIF = `"Liberation Serif", serif`;

const STYLES = [
  { s: "AaBbCcDc", n: "¶ Normal", font: DOC, fs: 13.5, c: "#000", on: true },
  { s: "AaBbCcDc", n: "¶ No Spaci...", font: DOC, fs: 13.5, c: "#000" },
  { s: "AaBbCc", n: "Heading 1", font: SERIF, fs: 19, c: "#2d5a94", wt: 700 },
  { s: "AaBbCc", n: "Heading 2", font: SERIF, fs: 16, c: "#4c83c4", wt: 700 },
  { s: "AaBbCcI", n: "Heading 3", font: SERIF, fs: 14.5, c: "#4c83c4", wt: 700 },
  { s: "AaBbCcD", n: "Heading 4", font: SERIF, fs: 14, c: "#4c83c4", wt: 700, i: true },
  { s: "AaB", n: "Title", font: SERIF, fs: 31, c: "#1e3f66" },
  { s: "AaBbCc.", n: "Subtitle", font: SERIF, fs: 14.5, c: "#5b8bcb", i: true },
  { s: "AaBbCcDc", n: "Subtle Em...", font: DOC, fs: 13.5, c: "#777", i: true },
  { s: "AaBbCcDc", n: "Emphasis", font: DOC, fs: 13.5, c: "#000", i: true },
  { s: "AaBbCcDc", n: "Intense E...", font: DOC, fs: 13.5, c: "#4c83c4", i: true },
  { s: "AaBbCcDc", n: "Strong", font: DOC, fs: 13.5, c: "#000", wt: 700 },
  { s: "AaBbCcDc", n: "Quote", font: DOC, fs: 13.5, c: "#000", i: true },
  { s: "AaBbCcDc", n: "Intense Q...", font: DOC, fs: 13.5, c: "#4c83c4", i: true, ul: true },
  { s: "AABBCCDD", n: "Subtle Ref...", font: DOC, fs: 13, c: "#c0504d", ul: true },
];

const TABS = [
  ["Insert", 52, 3], ["Page Layout", 91, 0], ["References", 87, 0],
  ["Mailings", 75, 0], ["Review", 62, 0], ["View", 60, 0],
];

export default function App() {
  return (
    <Desk>
      <Global />
      <Screen>
        <Chrome>
          <Blur />
          <TitleBar>
            <Qat>
              <WordDoc w={15} h={16} />
              <Svg w={14} h={15} style={{ marginLeft: 12 }}>
                <rect x="1" y="1" width="12" height="13" fill="#4a5c9c" stroke="#2c3768" />
                <rect x="3.5" y="1.5" width="7" height="5" fill="#eef0f5" />
                <rect x="4" y="9" width="6" height="5" fill="#c2c7d3" />
              </Svg>
              <Svg w={12} h={15} style={{ marginLeft: 10 }}>
                <path d="M3 2v5h5M3 7c3-4 8-2 7 3-.4 2-2 3-3 3" fill="none" stroke="#2f6fc4" strokeWidth="2.2" />
              </Svg>
              <Caret $ml={6} $c="#333" />
              <Svg w={14} h={15} style={{ marginLeft: 10 }}>
                <path d="M11 2v5H6M4 3c-3 3-2 9 3 10 3 .5 5-1 6-4" fill="none" stroke="#2f6fc4" strokeWidth="2.2" />
              </Svg>
              <Sep $ml={8} />
              <Svg w={8} h={10} style={{ marginLeft: 6 }}>
                <rect x="1" y="1" width="6" height="1.4" fill="#333" />
                <path d="M1 5h6L4 8z" fill="#333" />
              </Svg>
            </Qat>
            <WindowTitle>Scenario 6_Hydrology_v01  -  Microsoft Word</WindowTitle>
            <WinButtons>
              <WinBtn $w={34}>
                <Svg w={12} h={6}><rect x="0" y="2" width="12" height="3" fill="#fff" stroke="#777" strokeWidth=".6" /></Svg>
              </WinBtn>
              <WinBtn $w={26}>
                <Svg w={12} h={12}><rect x="3.5" y=".5" width="8" height="8" fill="none" stroke="#444" /><rect x=".5" y="3.5" width="8" height="8" fill="#d9dbdd" stroke="#444" /></Svg>
              </WinBtn>
              <WinBtn $w={43} $close>X</WinBtn>
            </WinButtons>
          </TitleBar>
          <TabRow>
            <FileTab>File</FileTab>
            <Tab $w={55} $ml={4} $on>Home</Tab>
            {TABS.map(([t, w, ml]) => <Tab key={t} $w={w} $ml={ml}>{t}</Tab>)}
            <HelpArea>
              <Svg w={10} h={9}><path d="M5 1L1 6.5c1 1.5 7 1.5 8 0z" fill="none" stroke="#333" strokeWidth="1.3" /></Svg>
              <HelpDot>?</HelpDot>
            </HelpArea>
          </TabRow>
        </Chrome>

        <RibbonBar>
          <Group $w={150}>
            <GroupBody>
              <PasteCol>
                <PasteIcon />
                <div style={{ marginTop: 4 }}>Paste</div>
                <Caret $ml={0} />
              </PasteCol>
              <SmallCol>
                <SmallRow $dim><IconSlot><ScissorIcon /></IconSlot>Cut</SmallRow>
                <SmallRow $dim><IconSlot><CopyIcon /></IconSlot>Copy</SmallRow>
                <SmallRow><IconSlot><BrushIcon /></IconSlot>Format Painter</SmallRow>
              </SmallCol>
            </GroupBody>
            <GroupLabel>Clipboard</GroupLabel>
            <Launcher />
          </Group>

          <Group $w={269}>
            <GroupBody>
              <ToolCol $pl={6}>
                <ToolRow>
                  <Combo $w={98}>Calibri (Body)<Caret /></Combo>
                  <Combo $w={41}>11<Caret /></Combo>
                  <Tool $w={16} $ml={5} $serif $fs={18} $b>A</Tool>
                  <Tool $w={13} $ml={5} $serif $fs={13} $b>A</Tool>
                  <Sep $ml={10} />
                  <Tool $w={24} $ml={8} $serif $fs={14} $b>Aa</Tool>
                  <Caret $ml={0} />
                  <Sep $ml={4} />
                  <Tool $w={17} $ml={9}>
                    <Svg w={17} h={17}>
                      <rect x="1" y="1" width="10" height="8" fill="#fff" stroke="#6c7a90" />
                      <path d="M6 15l7-7 3 3-6 5z" fill="#dfe8f5" stroke="#5a7fb0" />
                    </Svg>
                  </Tool>
                </ToolRow>
                <ToolRow>
                  <Tool $w={22} $on $serif $b $fs={14}>B</Tool>
                  <Tool $w={14} $ml={5} $serif $i $fs={14}>I</Tool>
                  <Tool $w={15} $ml={10} $serif $b $fs={14} style={{ textDecoration: "underline" }}>U</Tool>
                  <Caret $ml={4} />
                  <Tool $w={17} $ml={6} $serif $fs={11} style={{ textDecoration: "line-through" }}>abc</Tool>
                  <Tool $w={14} $ml={8} $fs={12} $b>x<sub style={{ fontSize: 7, color: "#2f6fc4" }}>2</sub></Tool>
                  <Tool $w={14} $ml={9} $fs={12} $b>x<sup style={{ fontSize: 7, color: "#2f6fc4" }}>2</sup></Tool>
                  <Sep $ml={9} />
                  <Tool $w={18} $ml={9} $fs={19} $b style={{ color: "#bcd6f0", WebkitTextStroke: "1px #5a9ad8" }}>A</Tool>
                  <Caret $ml={1} />
                  <Tool $w={16} $ml={6} $fs={10}>
                    <Svg w={16} h={18}>
                      <rect x="0" y="14" width="16" height="4" fill="#ff0" />
                      <text x="0" y="10" fontFamily="Liberation Sans" fontSize="10" fill="#333">ab</text>
                      <path d="M10 10l5-7 1 1-5 7z" fill="#7d9ac4" />
                    </Svg>
                  </Tool>
                  <Caret $ml={5} />
                  <Tool $w={16} $ml={6}>
                    <Svg w={16} h={18}>
                      <rect x="0" y="14" width="16" height="4" fill="#f00" />
                      <text x="2" y="12" fontFamily="Liberation Serif" fontWeight="700" fontSize="15" fill="#1e3f78">A</text>
                    </Svg>
                  </Tool>
                  <Caret $ml={4} />
                </ToolRow>
              </ToolCol>
            </GroupBody>
            <GroupLabel>Font</GroupLabel>
            <Launcher />
          </Group>

          <Group $w={228}>
            <GroupBody>
              <ToolCol $pl={5}>
                <ToolRow>
                  <Tool $w={18} $ml={5}><ListIcon dot="#2f6fc4" /></Tool>
                  <Caret $ml={3} />
                  <Tool $w={18} $ml={5}><ListIcon dot="#5e85c0" /></Tool>
                  <Caret $ml={3} />
                  <Tool $w={18} $ml={5}><ListIcon dot="#7fa0cc" /></Tool>
                  <Caret $ml={1} />
                  <Sep $ml={5} />
                  <Tool $w={16} $ml={8}><IndentIcon /></Tool>
                  <Tool $w={16} $ml={6}><IndentIcon flip /></Tool>
                  <Sep $ml={6} />
                  <Tool $w={18} $ml={7}>
                    <Svg w={18} h={18}>
                      <text x="0" y="8" fontFamily="Liberation Sans" fontWeight="700" fontSize="9" fill="#2f6fc4">A</text>
                      <text x="0" y="17" fontFamily="Liberation Sans" fontWeight="700" fontSize="9" fill="#a02c2c">Z</text>
                      <path d="M13 1v14M10 12l3 4 3-4" stroke="#333" fill="none" strokeWidth="1.3" />
                    </Svg>
                  </Tool>
                  <Sep $ml={7} />
                  <Tool $w={14} $ml={9} $fs={16} $b>¶</Tool>
                </ToolRow>
                <ToolRow>
                  <Tool $w={23} $on><Lines rows={[[1, 14], [1, 9], [1, 14], [1, 9], [1, 14]]} /></Tool>
                  <Tool $w={17} $ml={4}><Lines rows={[[0, 16], [3, 10], [0, 16], [3, 10], [0, 16]]} /></Tool>
                  <Tool $w={17} $ml={8}><Lines rows={[[0, 16], [6, 10], [0, 16], [6, 10], [0, 16]]} /></Tool>
                  <Tool $w={17} $ml={6}><Lines rows={[[0, 16], [0, 16], [0, 16], [0, 16], [0, 16]]} /></Tool>
                  <Sep $ml={6} />
                  <Tool $w={19} $ml={8}>
                    <Svg w={19} h={18}>
                      <path d="M4 1l3 4H1zM4 17l3-4H1z" fill="#2f6fc4" />
                      <path d="M4 4v10" stroke="#2f6fc4" />
                      {[4, 8, 12].map((y) => <rect key={y} x="9" y={y} width="10" height="1.4" fill="#444" />)}
                    </Svg>
                  </Tool>
                  <Caret $ml={2} />
                  <Sep $ml={8} />
                  <Tool $w={18} $ml={6}>
                    <Svg w={18} h={18}>
                      <path d="M8 1l7 7-6 6-7-6z" fill="#eaf2fb" stroke="#5a7fb0" />
                      <path d="M15 10c1.5 2 2 3 1 4s-2 0-2-1z" fill="#2f6fc4" />
                      <rect x="1" y="15" width="15" height="2" fill="#fff" stroke="#888" strokeWidth=".6" />
                    </Svg>
                  </Tool>
                  <Caret $ml={3} />
                  <Tool $w={16} $ml={8}>
                    <Svg w={16} h={16}>
                      <rect x="1" y="1" width="14" height="14" fill="none" stroke="#888" strokeDasharray="1 1" />
                      <path d="M8 1v14M1 8h14" stroke="#888" strokeDasharray="1 1" />
                      <path d="M1 15h14" stroke="#222" />
                    </Svg>
                  </Tool>
                  <Caret $ml={4} />
                </ToolRow>
              </ToolCol>
            </GroupBody>
            <GroupLabel>Paragraph</GroupLabel>
            <Launcher />
          </Group>

          <Group $w={1155}>
            <GroupBody>
              <Gallery>
                {STYLES.map((st) => (
                  <StyleCard key={st.n} $on={st.on}>
                    <Sample $font={st.font} $fs={st.fs} $c={st.c} $wt={st.wt} $i={st.i} $ul={st.ul}>{st.s}</Sample>
                    <StyleName>{st.n}</StyleName>
                  </StyleCard>
                ))}
                <GalleryArrows>
                  <GalleryArrow $dim>▲</GalleryArrow>
                  <GalleryArrow>▼</GalleryArrow>
                  <GalleryArrow>▼</GalleryArrow>
                </GalleryArrows>
              </Gallery>
              <BigBtn>
                <ChangeStylesIcon />
                <span style={{ marginTop: 3 }}>Change</span>
                <span>Styles <Caret $ml={0} /></span>
              </BigBtn>
            </GroupBody>
            <GroupLabel>Styles</GroupLabel>
            <Launcher />
          </Group>

          <Group $w={75}>
            <GroupBody>
              <SmallCol>
                <SmallRow><IconSlot><Binoculars /></IconSlot>Find <Caret /></SmallRow>
                <SmallRow>
                  <IconSlot>
                    <Svg w={15} h={16}>
                      <text x="0" y="7" fontFamily="Liberation Sans" fontSize="8" fill="#666">ab</text>
                      <text x="4" y="15" fontFamily="Liberation Sans" fontWeight="700" fontSize="8" fill="#2a8a3a">ac</text>
                    </Svg>
                  </IconSlot>
                  Replace
                </SmallRow>
                <SmallRow>
                  <IconSlot>
                    <Svg w={12} h={16}><path d="M2 1v12l3-3 2 5 2-1-2-5h4z" fill="#fff" stroke="#7d8ca0" /></Svg>
                  </IconSlot>
                  Select <Caret />
                </SmallRow>
              </SmallCol>
            </GroupBody>
            <GroupLabel>Editing</GroupLabel>
          </Group>
        </RibbonBar>

        <Main>
          <NavPane>
            <NavHead>
              Navigation
              <NavTools>
                <Tri $s={5} $c="#444" />
                <span style={{ fontSize: 13, fontWeight: 700, lineHeight: 1 }}>✕</span>
              </NavTools>
            </NavHead>
            <Search>Search Document<NavTools><Magnifier /><Caret $ml={0} /></NavTools></Search>
            <NavTabs>
              <NavTab $first $on>
                <Svg w={10} h={15}><path d="M1 1h8v13H1z" fill="#fff" stroke="#4c6a90" /><path d="M3 4h4M3 7h4M3 10h4" stroke="#4c6a90" /></Svg>
              </NavTab>
              <NavTab>
                <Svg w={13} h={14}>{[[0, 0], [8, 0], [0, 8], [8, 8]].map(([x, y]) => <rect key={`${x}${y}`} x={x + 0.5} y={y + 0.5} width="4.5" height="5" fill="#fff" stroke="#4c6a90" />)}</Svg>
              </NavTab>
              <NavTab>
                <Svg w={14} h={14}><rect x=".5" y=".5" width="13" height="13" fill="#fff" stroke="#4c6a90" /><path d="M3 3h8M3 7h8M3 11h8" stroke="#e8a628" strokeWidth="2" /></Svg>
              </NavTab>
              <NavArrows>
                <Tri $up $s={5} $c="#555" />
                <Tri $s={5} $c="#666" />
              </NavArrows>
            </NavTabs>
            <NavTree>
              <TreeList>
                <TreeItem $w={172} $center>
                  <Svg w={8} h={7}><rect width="8" height="1.4" fill="#444" /><path d="M4 2l4 4H0z" fill="#444" /></Svg>
                </TreeItem>
                <TreeItem $w={140} />
                <TreeItem $w={140} $on>Response</TreeItem>
                <TreeItem $w={140}>References:</TreeItem>
              </TreeList>
              <ScrollRail $w={15}>
                <ScrollArrow $boxed $h={17}><Tri $up $s={4} $c="#9aa6c0" /></ScrollArrow>
                <ScrollArrow $boxed $h={17} $mt={760}><Tri $s={4} $c="#9aa6c0" /></ScrollArrow>
              </ScrollRail>
            </NavTree>
          </NavPane>

          <Workspace>
            <Page>
              <Caption $ws={1}>Figure 1(left)&nbsp; <Squiggle>Visible</Squiggle>&nbsp; image, (middle)&nbsp; version-1 snow/cloud enhancement, and (right) corresponding</Caption>
              <Caption>NOAA/NESDIS snow product (from Miller2005)</Caption>
              <Line $b $mt={40}>Data distribution:</Line>
              <Line $mt={1}><Mark>TBD</Mark></Line>
              <Line $b $mt={16}>Area of Interest (AoI):</Line>
              <Line $mt={17}>Red coloured area in the North of Norway</Line>
              <Figure><NorwayMap /></Figure>
              <Line $b $mt={72} $ml={5}>Users:</Line>
              <Line $mt={15}><Squiggle>Norwegian Meteorological Institute.</Squiggle></Line>
              <Line $b $mt={17}>Service Type:</Line>
              <Line $mt={17}><Squiggle>Advanced.</Squiggle></Line>
            </Page>
          </Workspace>

          <VScroll $w={17}>
            <SplitBar />
            <RulerBtn>
              <Svg w={12} h={12}><rect x="1" y="1" width="8" height="9" fill="#fff" stroke="#666" /><path d="M6 6h5v5H6z" fill="#eee" stroke="#666" /></Svg>
            </RulerBtn>
            <ScrollArrow $h={17} $mt={3}><Tri $up $s={4} $c="#444" /></ScrollArrow>
            <Thumb $mt={242}>≡</Thumb>
            <ScrollArrow $h={17} $mt={408}><Tri $s={4} $c="#444" /></ScrollArrow>
            <ScrollArrow $h={18} $mt={0}><Svg w={8} h={8}><path d="M4 0l3 3H1zM4 4l3 3H1z" fill="#444" /></Svg></ScrollArrow>
            <ScrollArrow $h={18}><Svg w={10} h={10}><circle cx="5" cy="5" r="3.5" fill="none" stroke="#555" strokeWidth="1.4" /></Svg></ScrollArrow>
            <ScrollArrow $h={18}><Svg w={8} h={8}><path d="M4 8L1 5h6zM4 4L1 1h6z" fill="#444" /></Svg></ScrollArrow>
          </VScroll>
        </Main>

        <Status>
          <StatusCell $w={77} $pl={8}>Page: 2 of 4</StatusCell>
          <StatusCell $w={77} $pl={9}>Words: 335</StatusCell>
          <StatusCell $w={192} $pl={9}>
            <Svg w={18} h={18}>
              <path d="M1 12l8-6 6 4-8 6z" fill="#eef2f8" stroke="#4a6fa8" />
              <path d="M7 2l8 9M15 2l-8 9" stroke="#d8352a" strokeWidth="2.2" />
            </Svg>
            <span style={{ marginLeft: 15, fontSize: 12 }}>English (U.K.)</span>
          </StatusCell>
          <ViewArea>
            <Sep $ml={0} />
            <ViewBtn $w={19} $ml={4} $on><Lines rows={[[2, 11], [2, 11], [2, 11], [2, 11]]} /></ViewBtn>
            <ViewBtn $w={13} $ml={5}>
              <Svg w={13} h={14}><path d="M1 2l5 1 5-1v10l-5 1-5-1zM6 3v10" fill="#fff" stroke="#556" /></Svg>
            </ViewBtn>
            <ViewBtn $w={14} $ml={4}>
              <Svg w={14} h={14}><rect x=".5" y="1" width="10" height="10" fill="#fff" stroke="#556" /><circle cx="10.5" cy="10.5" r="3" fill="#2a8ac4" /></Svg>
            </ViewBtn>
            <ViewBtn $w={12} $ml={6}><Lines w={12} rows={[[0, 5], [3, 8], [3, 8], [0, 5], [3, 8]]} /></ViewBtn>
            <ViewBtn $w={12} $ml={6}><Lines w={12} rows={[[0, 12], [0, 12], [0, 12], [0, 12], [0, 12]]} /></ViewBtn>
            <Zoom>120%</Zoom>
            <ZoomRound $ml={5}>−</ZoomRound>
            <ZoomTrack><ZoomThumb /></ZoomTrack>
            <ZoomRound $ml={0}>+</ZoomRound>
            <ViewBtn $w={3} />
          </ViewArea>
        </Status>

        <Taskbar>
          <Orb><WinFlag /></Orb>
          <TaskBtn $look="run" $ml={15}><ChromeIcon /></TaskBtn>
          <TaskBtn $look="run"><FolderIcon /></TaskBtn>
          <TaskBtn><MediaIcon /></TaskBtn>
          <TaskBtn $look="hot" $ml={3}><SkypeIcon /></TaskBtn>
          <TaskBtn $look="run"><ExcelIcon /></TaskBtn>
          <TaskBtn $look="active"><WordDoc w={30} h={32} /></TaskBtn>
          <TaskStub />
          <Tray>
            <Lang>ES</Lang>
            <Tri $up $s={4} $c="#fff" />
            <ViewBtn $w={18} $ml={10}><FlagIcon /></ViewBtn>
            <ViewBtn $w={15} $ml={8}><PlugIcon /></ViewBtn>
            <ViewBtn $w={16} $ml={9}><SignalIcon /></ViewBtn>
            <ViewBtn $w={16} $ml={9}><SpeakerIcon /></ViewBtn>
            <Clock>13:37<br />15/01/2014</Clock>
            <ShowDesktop />
          </Tray>
        </Taskbar>
      </Screen>
      <Second>
        <Wallpaper />
      </Second>
    </Desk>
  );
}
